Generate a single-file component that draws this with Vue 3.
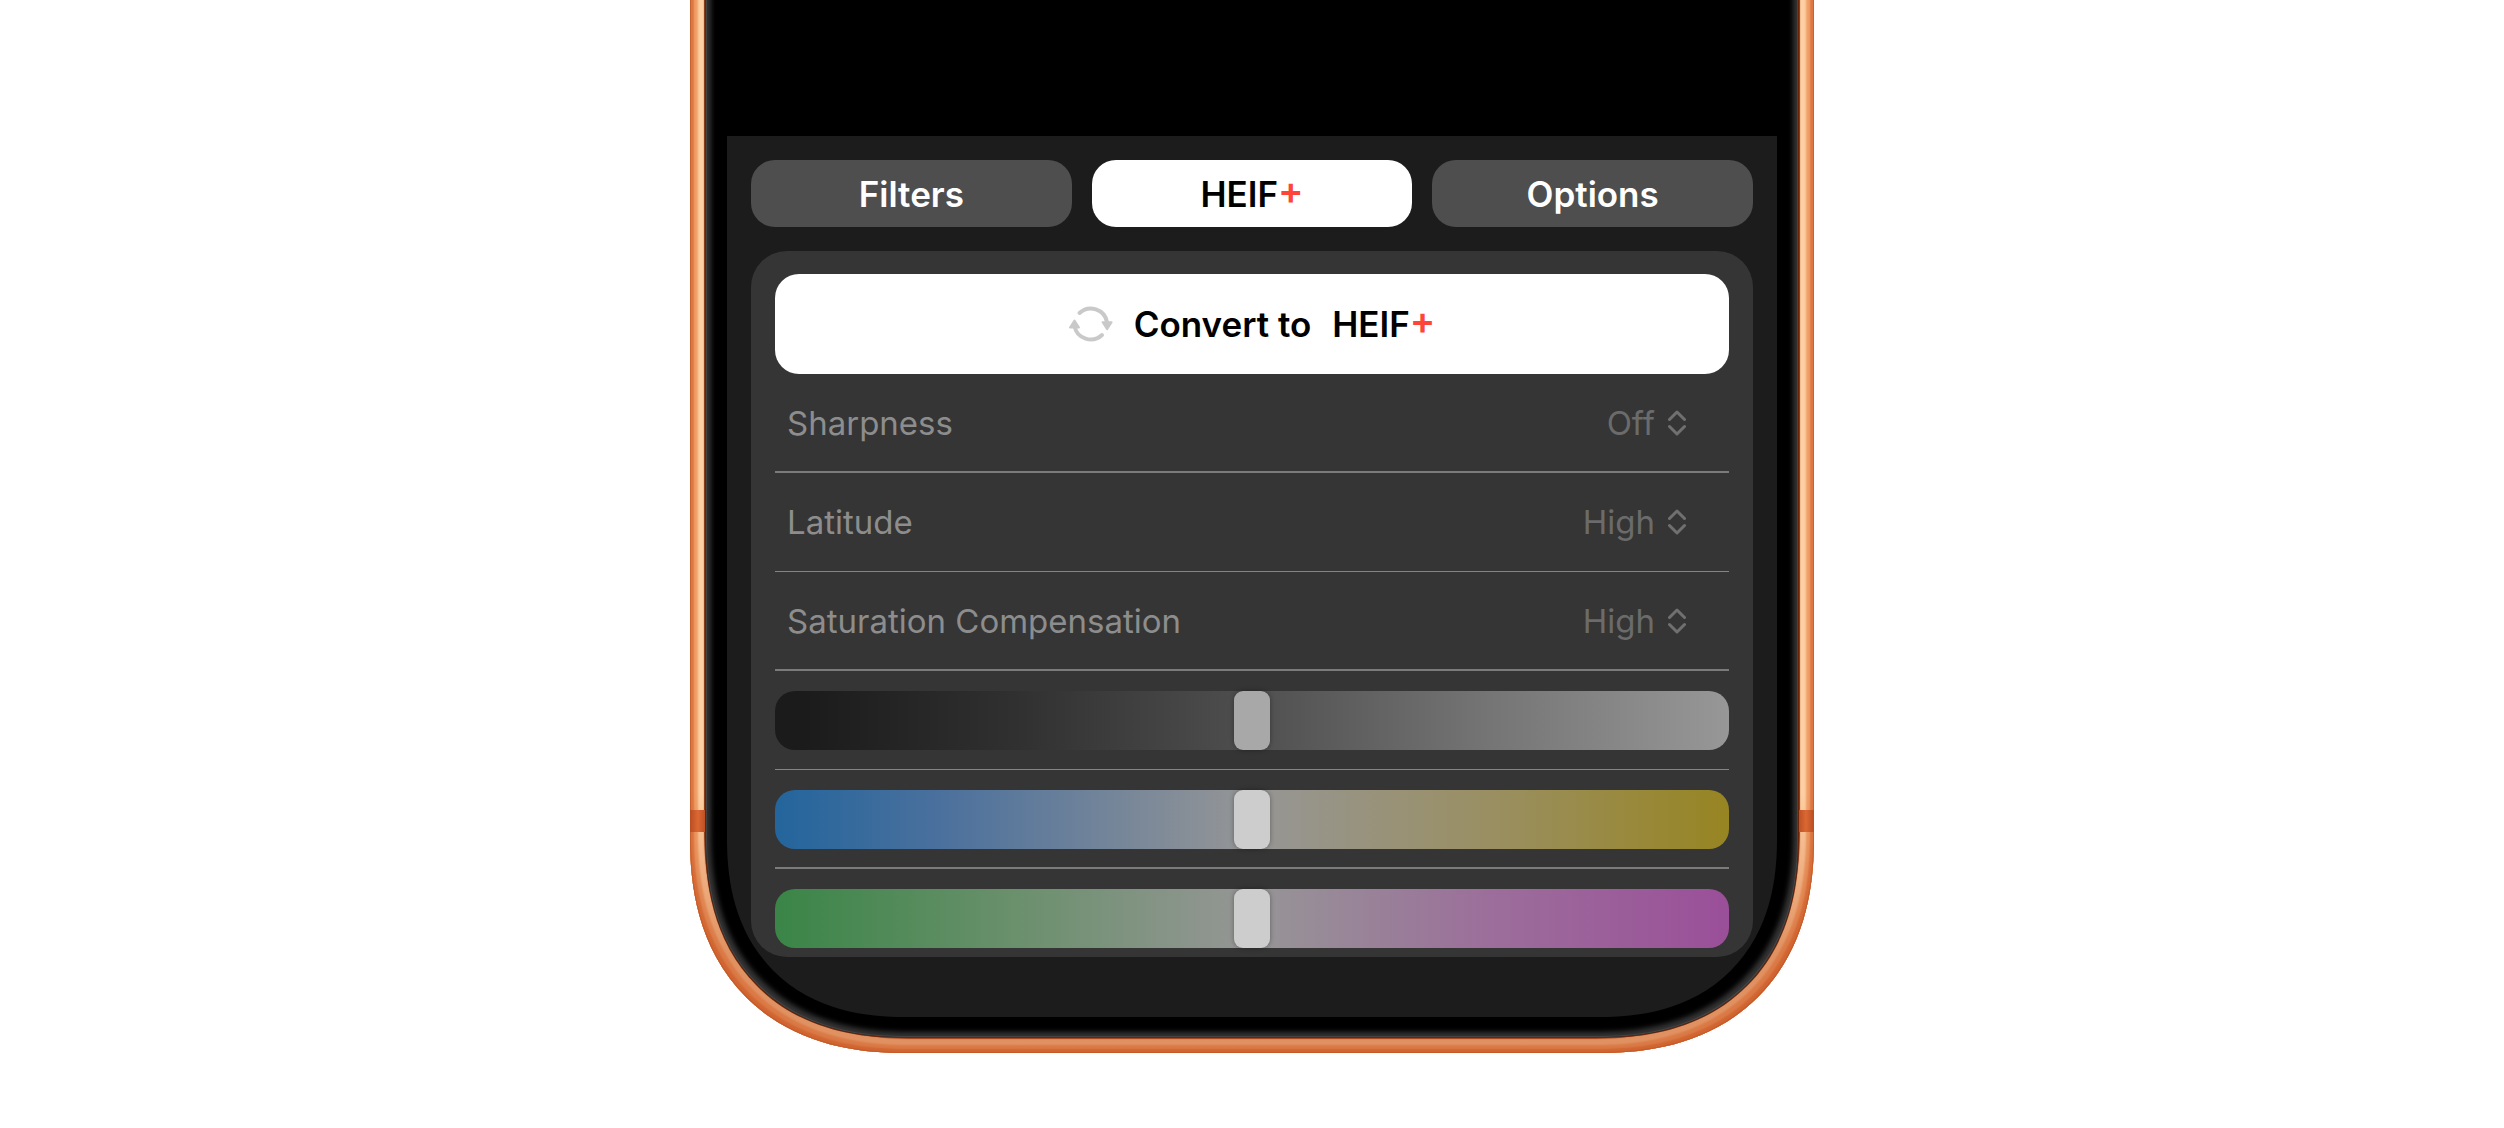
<script setup>
import { reactive } from 'vue'

const tabs = [
  { id: 'filters', label: 'Filters', plus: false },
  { id: 'heif', label: 'HEIF', plus: true },
  { id: 'options', label: 'Options', plus: false },
]

const settings = reactive([
  { id: 'sharpness', label: 'Sharpness', value: 'Off', options: ['Off', 'Low', 'High'] },
  { id: 'latitude', label: 'Latitude', value: 'High', options: ['Off', 'Low', 'High'] },
  { id: 'saturation', label: 'Saturation Compensation', value: 'High', options: ['Off', 'Low', 'High'] },
])

const sliders = reactive([
  { id: 'exposure', label: 'Exposure', value: 50 },
  { id: 'temperature', label: 'Temperature', value: 50 },
  { id: 'tint', label: 'Tint', value: 50 },
])
</script>

<template>
  <main class="page">
    <div class="phone">
      <span class="antenna antenna-left"></span>
      <span class="antenna antenna-right"></span>
      <div class="bezel">
        <div class="display">
          <div class="preview"></div>
          <section class="editor">
            <nav class="tabs">
              <button
                v-for="tab in tabs"
                :key="tab.id"
                type="button"
                class="tab"
                :class="{ active: tab.plus }"
              >{{ tab.label }}<span v-if="tab.plus" class="plus">+</span></button>
            </nav>

            <div class="card">
              <button type="button" class="convert">
                <svg class="sync" viewBox="0 0 44 40" aria-hidden="true">
                  <path d="M10.500 9A16.500 16.500 0 0 1 38 18" />
                  <path d="M33 31A16.500 16.500 0 0 1 5.500 22" />
                  <path class="head" d="M33.600 18.200h9l-4.500 7z" />
                  <path class="head" d="M1 23.500h9l-4.500-7z" />
                </svg>
                <span>Convert to</span>
                <span>HEIF<span class="plus">+</span></span>
              </button>

              <div v-for="item in settings" :key="item.id" class="row setting">
                <label :for="item.id">{{ item.label }}</label>
                <select :id="item.id" v-model="item.value" disabled>
                  <option v-for="o in item.options" :key="o">{{ o }}</option>
                </select>
                <svg class="chevrons" viewBox="0 0 18 26" aria-hidden="true">
                  <path d="M1.500 9.500 9 2l7.500 7.500M1.500 16.500 9 24l7.500-7.500" />
                </svg>
              </div>

              <div v-for="s in sliders" :key="s.id" class="row slider-row">
                <input
                  v-model="s.value"
                  type="range"
                  min="0"
                  max="100"
                  class="slider"
                  :class="s.id"
                  :aria-label="s.label"
                />
              </div>
            </div>
          </section>
        </div>
      </div>
    </div>
  </main>
</template>

<style>
body {
  margin: 0;
  background: #fff;
}
</style>

<style scoped>
.page {
  display: flex;
  justify-content: center;
  overflow: hidden;
  padding-bottom: 75px;
  font-family: Inter, "Liberation Sans", sans-serif;
  font-size: 33px;
  line-height: 40px;
}

.phone {
  position: relative;
  box-sizing: border-box;
  width: 100%;
  max-width: 1124px;
  margin-top: -40px;
  padding: 16px;
  border-radius: 0 0 190px 190px;
  background: #7a2c0e;
  box-shadow:
    inset 0 0 0 1px #c8602f,
    inset 0 0 2px 4px #dd7641,
    inset 0 0 2px 8px #f0a06a,
    inset 0 0 1px 14px #fdcfa2;
}

.phone::after {
  content: "";
  position: absolute;
  inset: 0;
  border-radius: inherit;
  background: linear-gradient(transparent calc(100% - 260px), rgba(196, 84, 34, 0.5) calc(100% - 100px));
}

.antenna {
  position: absolute;
  bottom: 221px;
  width: 16px;
  height: 22px;
  background: linear-gradient(90deg, #b94c20, #dc6a36 50%, #b94c20);
}

.antenna-left {
  left: 0;
}

.antenna-right {
  right: 0;
}

.bezel {
  position: relative;
  z-index: 1;
  padding: 0 21px 20px;
  border-radius: 0 0 174px 174px;
  background: #000;
  box-shadow:
    0 0 0 1px #6b2408,
    inset 0 0 0 1px #444,
    inset 0 0 5px 5px #343434;
}

.display {
  overflow: hidden;
  border-radius: 0 0 156px 156px;
  background: #1c1c1c;
}

.preview {
  height: 160px;
  background: #000;
}

.editor {
  display: flex;
  flex-direction: column;
  gap: 24px;
  padding: 24px 24px 60px;
}

.tabs {
  display: grid;
  grid-template-columns: repeat(3, 1fr);
  gap: 20px;
}

button {
  border: 0;
  font: inherit;
  font-size: 35px;
  font-weight: 600;
}

.tab {
  height: 67px;
  padding: 0;
  border-radius: 24px;
  background: #4e4e4e;
  color: #fff;
}

.tab.active,
.convert {
  background: #fff;
  color: #000;
}

.plus {
  position: relative;
  top: -3px;
  color: #ff453a;
  font-size: 38px;
  line-height: 0;
}

.card {
  padding: 23px 24px 0;
  border-radius: 36px;
  background: #353535;
}

.convert {
  display: flex;
  align-items: center;
  justify-content: center;
  gap: 21px;
  width: 100%;
  height: 100px;
  border-radius: 24px;
}

.sync {
  width: 44px;
  height: 40px;
  fill: none;
  stroke: #c9c9c9;
  stroke-width: 4;
  stroke-linecap: round;
}

.sync .head {
  fill: #c9c9c9;
  stroke-width: 2;
  stroke-linejoin: round;
}

.row {
  display: flex;
  align-items: center;
  box-sizing: border-box;
  height: 99px;
  border-bottom: 2px solid #7b7b7b;
}

.row:nth-child(odd) {
  border-bottom: 1px solid #858585;
}

.setting {
  gap: 13px;
  padding: 0 43px 0 12px;
  color: #8d8d8d;
}

.setting label {
  flex: 1;
}

select {
  appearance: none;
  padding: 0;
  border: 0;
  background: none;
  color: #6b6b6b;
  font: inherit;
  opacity: 1;
  text-align-last: right;
}

.chevrons {
  width: 18px;
  height: 26px;
  fill: none;
  stroke: #707070;
  stroke-width: 3;
  stroke-linecap: round;
  stroke-linejoin: round;
}

.row:last-child {
  height: 88px;
  border: 0;
}

.slider-row {
  align-items: flex-start;
  padding-top: 20px;
}

.slider {
  appearance: none;
  width: 100%;
  height: 59px;
  margin: 0;
  border-radius: 20px;
}

.exposure {
  background: linear-gradient(90deg, #1b1b1b 3%, #303030 25%, #4f4f4f 50%, #757575 75%, #979797);
}

.temperature {
  background: linear-gradient(90deg, #23659c, #4a709d 17%, #969696 50%, #9a8f62 75%, #978522);
}

.tint {
  background: linear-gradient(90deg, #3a8547, #6a906c 25%, #969696 50%, #9c6e9b 75%, #9a4f99);
}

.slider::-webkit-slider-thumb {
  appearance: none;
  width: 36px;
  height: 59px;
  border-radius: 9px;
  background: #cdcdcd;
  box-shadow: 0 0 5px rgba(0, 0, 0, 0.35);
}

.exposure::-webkit-slider-thumb {
  background: #a8a8a8;
}

@supports (corner-shape: squircle) {
  .phone,
  .phone::after,
  .bezel,
  .display {
    corner-shape: superellipse(1.2);
  }

  .phone {
    border-radius: 0 0 215px 215px;
  }

  .bezel {
    border-radius: 0 0 199px 199px;
  }

  .display {
    border-radius: 0 0 178px 178px;
  }
}
</style>
